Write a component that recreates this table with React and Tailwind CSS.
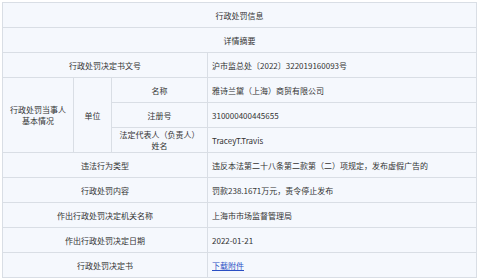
export default function App() {
  const cell = "bg-[#f5f8fd] flex items-center justify-center text-center px-1";
  const val = "bg-[#f5f8fd] flex items-center px-1";
  return (
    <div className="w-[480px] h-[279px] bg-white pt-[2px] pl-[2px]" style={{ fontFamily: '"Noto Sans CJK SC", "Noto Sans", sans-serif' }}>
      <div className="w-[475px] grid grid-cols-[70px_37px_95px_268px] auto-rows-[24px] gap-px bg-[#d9dee5] border border-[#d9dee5] text-[8px] leading-[11px] text-[#333]">
        <div className={`${cell} col-span-4`}>行政处罚信息</div>
        <div className={`${cell} col-span-4`}>详情摘要</div>
        <div className={`${cell} col-span-3`}>行政处罚决定书文号</div>
        <div className={val}>沪市监总处〔2022〕322019160093号</div>
        <div className={`${cell} row-span-3`}>行政处罚当事人<br />基本情况</div>
        <div className={`${cell} row-span-3`}>单位</div>
        <div className={cell}>名称</div>
        <div className={val}>雅诗兰黛（上海）商贸有限公司</div>
        <div className={cell}>注册号</div>
        <div className={val}>310000400445655</div>
        <div className={cell}>法定代表人（负责人）姓名</div>
        <div className={val}>TraceyT.Travis</div>
        <div className={`${cell} col-span-3`}>违法行为类型</div>
        <div className={val}>违反本法第二十八条第二款第（二）项规定，发布虚假广告的</div>
        <div className={`${cell} col-span-3`}>行政处罚内容</div>
        <div className={val}>罚款238.1671万元，责令停止发布</div>
        <div className={`${cell} col-span-3`}>作出行政处罚决定机关名称</div>
        <div className={val}>上海市市场监督管理局</div>
        <div className={`${cell} col-span-3`}>作出行政处罚决定日期</div>
        <div className={val}>2022-01-21</div>
        <div className={`${cell} col-span-3`}>行政处罚决定书</div>
        <div className={val}><span className="text-[#2b4fc4] underline">下载附件</span></div>
      </div>
    </div>
  );
}
